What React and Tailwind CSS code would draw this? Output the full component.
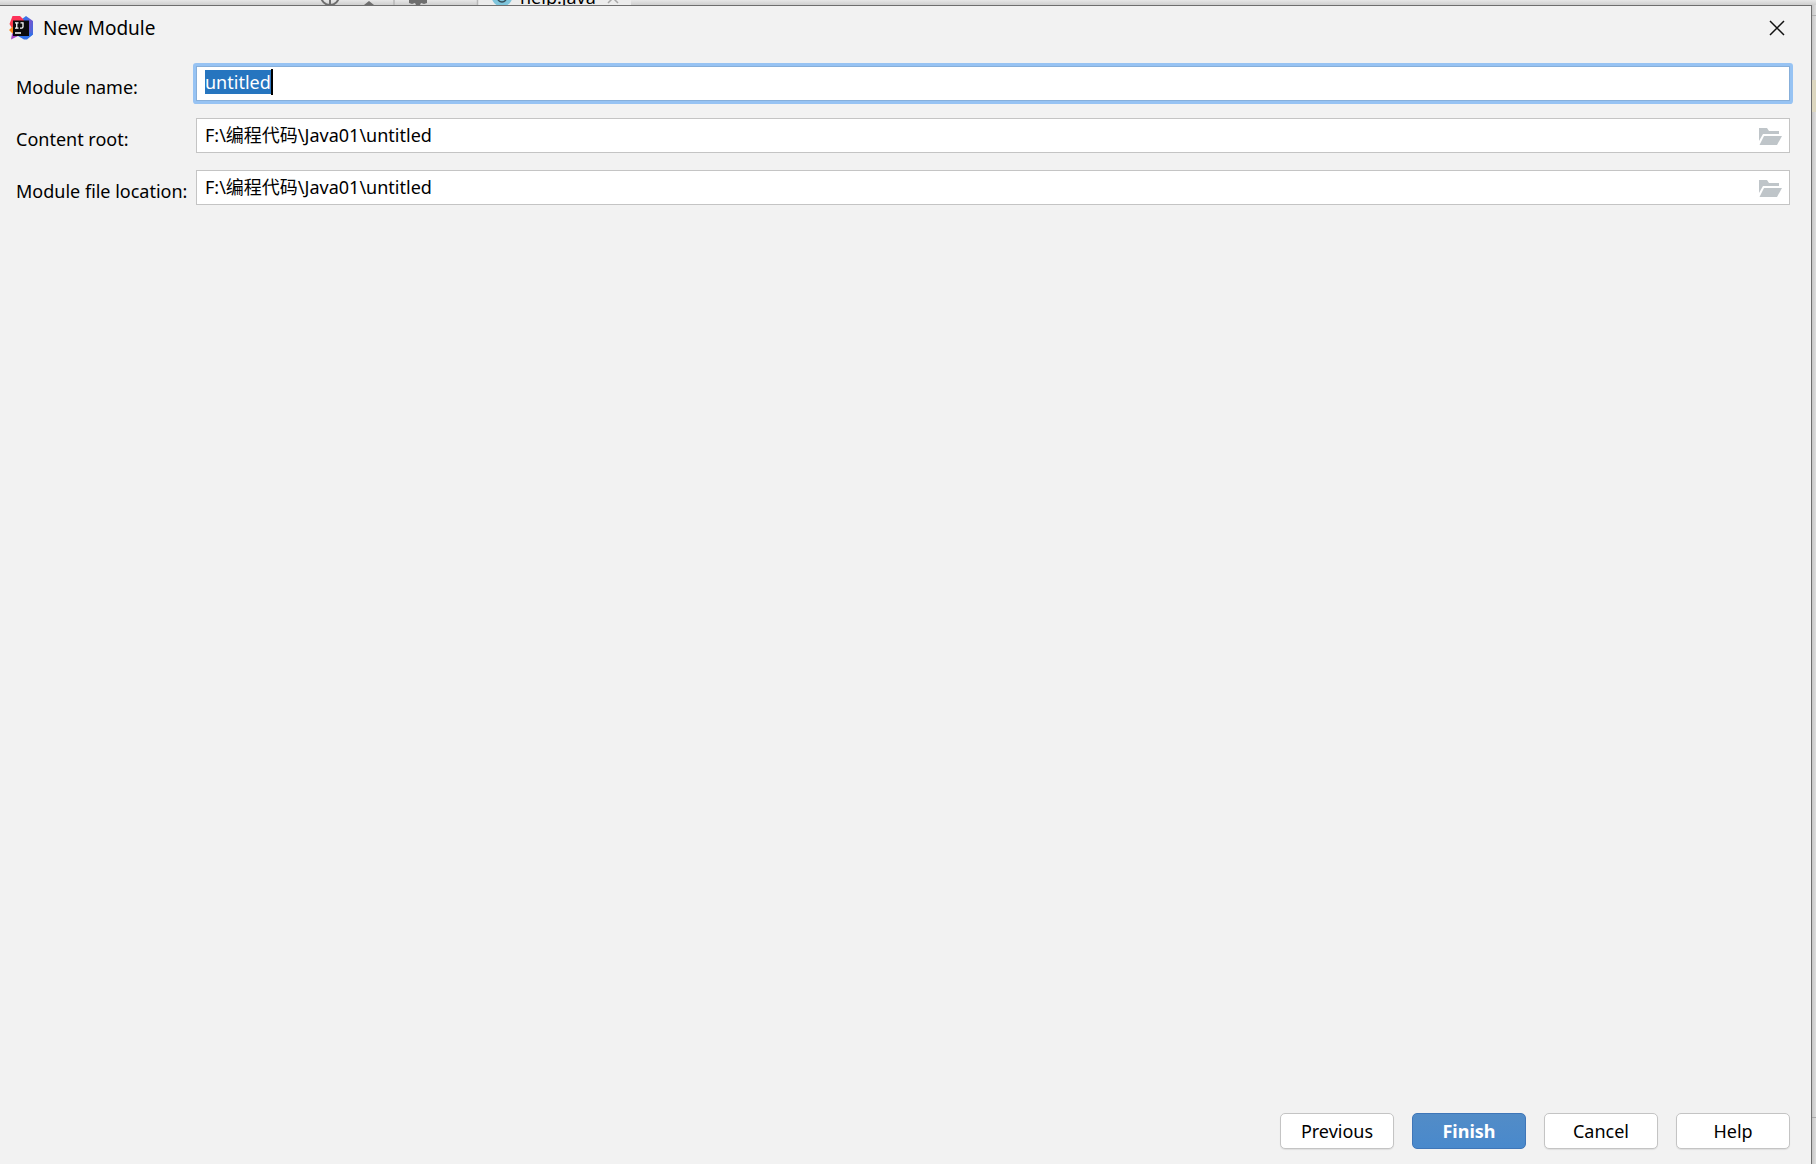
import { useState } from "react";

const fieldClass =
    "w-full h-[35px] px-2 pb-[3px] bg-white border border-[#c4c4c4] text-[18px] leading-[26px] text-black outline-none selection:bg-[#2675bf] selection:text-white";

const buttonClass =
    "w-[114px] h-9 rounded-[5px] border border-[#c4c4c4] bg-white text-[18px] leading-[26px] text-black shadow-[0_1px_1px_rgba(0,0,0,0.08)]";

const IdeaLogo = () => (
    <svg width="24" height="24" viewBox="0 0 24 24" aria-hidden="true" className="shrink-0">
        <defs>
            <linearGradient id="ideaRed" x1="0" y1="0" x2="0" y2="1">
                <stop offset="0" stopColor="#fe315d" />
                <stop offset="1" stopColor="#f8413f" />
            </linearGradient>
            <linearGradient id="ideaBlue" x1="0" y1="0" x2="1" y2="0.6">
                <stop offset="0" stopColor="#2f7bec" />
                <stop offset="0.4" stopColor="#3d70e6" />
                <stop offset="0.7" stopColor="#6f57d0" />
                <stop offset="1" stopColor="#4a68dd" />
            </linearGradient>
        </defs>
        <path d="M13 3 17 0l7 5v13.500L20 21l-8-1z" fill="url(#ideaBlue)" />
        <path d="M3.500 0H11l4 4-3 10H4L.500 8z" fill="url(#ideaRed)" />
        <path d="M4 10.500 0 14l4 4z" fill="#fc8a1c" />
        <path d="M3 18 2 23.500 9 20h4v-3H4z" fill="#a646c8" />
        <path d="m9 20 6 3.500h3l6-5-3-2z" fill="#3070e8" />
        <path d="M4 4.500h16v15.500H4z" fill="#0b0b0d" />
        <path d="M6 6.800h3.500M7.750 6.800v5.400M6 12.200h3.500M11.500 6.800h2.500v4q0 1.400-1.400 1.400H11M6 17h6" fill="none" stroke="#fff" strokeWidth="1.300" />
    </svg>
);

const FolderIcon = () => (
    <svg width="23" height="18" viewBox="0 0 23 18" aria-hidden="true" fill="#bfc5c9">
        <path d="M0 0h8l2 3h10v3H4L0 13z" />
        <path d="M5 8h18l-5 9H0.500z" />
    </svg>
);

// sliver of the editor toolbar that stays visible above the dialog
const EditorStrip = () => (
    <div className="flex h-[5px] shrink-0 overflow-hidden bg-linear-to-b from-[#e7e7e7] to-[#cfcfcf]">
        <svg width="660" height="5" viewBox="0 0 660 5" aria-hidden="true" className="shrink-0">
            <path d="M478 0h153v5H478z" fill="#ececec" />
            <circle cx="330" cy="-4" r="9" fill="none" stroke="#6e6e6e" strokeWidth="2" />
            <path d="M330 0v5" stroke="#6e6e6e" strokeWidth="2" />
            <path d="m364 5 5-4 5 4z" fill="#6e6e6e" />
            <path d="M394 0v5M477.500 0v5" stroke="#b8b8b8" strokeWidth="1.500" />
            <path d="M409 0h18v3l-3 1-3-1-1 2h-4l-1-2-3 1-3-1z" fill="#6e6e6e" />
            <circle cx="502" cy="-4" r="10.500" fill="#7fc5dc" />
            <path d="M498 0q4 4 8 0" fill="none" stroke="#34505c" strokeWidth="1.500" />
            <text x="520" y="4" fontFamily="Noto Sans" fontSize="18" fill="#000">help.java</text>
            <path d="m608 3 10-10M608-7l10 10" stroke="#a8a8a8" strokeWidth="1.500" />
        </svg>
    </div>
);

const PathField = ({ id, label, value, onChange }) => (
    <div className="flex">
        <label htmlFor={id} className="w-[180px] shrink-0 pt-2 whitespace-nowrap">{label}</label>
        <div className="relative flex-1">
            <input id={id} type="text" value={value} onChange={e => onChange(e.target.value)} className={fieldClass} />
            <button type="button" aria-label="Browse" className="absolute right-2 top-[10px]">
                <FolderIcon />
            </button>
        </div>
    </div>
);

const App = () => {
    const [name, setName] = useState("untitled");
    const [contentRoot, setContentRoot] = useState("F:\\编程代码\\Java01\\untitled");
    const [fileLocation, setFileLocation] = useState("F:\\编程代码\\Java01\\untitled");

    return (
        <div className="flex flex-col min-h-screen bg-[#e0e0e0] font-['Noto_Sans','Noto_Sans_CJK_SC',sans-serif] text-[18px] leading-[26px] text-black">
            <EditorStrip />
            <div className="flex flex-1">
                <div role="dialog" aria-labelledby="title" className="flex flex-col flex-1 bg-[#f2f2f2] border-t border-r border-[#6e6e6e]">
                    <header className="flex items-center h-11 pl-[9px] pr-5">
                        <IdeaLogo />
                        <h1 id="title" className="ml-[10px] flex-1 text-[19px]">New Module</h1>
                        <button type="button" aria-label="Close" className="p-[6px]">
                            <svg width="16" height="16" viewBox="0 0 16 16" aria-hidden="true">
                                <path d="m1 1 14 14M15 1 1 15" stroke="#111" strokeWidth="1.500" />
                            </svg>
                        </button>
                    </header>

                    <form className="flex flex-col flex-1 pt-4 pl-4 pr-[21px] pb-[15px]" onSubmit={e => e.preventDefault()}>
                        <div className="flex flex-col gap-[17px]">
                            <div className="flex">
                                <label htmlFor="name" className="w-[180px] shrink-0 pt-2 whitespace-nowrap">Module name:</label>
                                <div className="relative flex-1 ring-3 ring-[#97c3f3] rounded-[1px]">
                                    <input
                                        id="name"
                                        type="text"
                                        value={name}
                                        onChange={e => setName(e.target.value)}
                                        onFocus={e => e.target.select()}
                                        autoFocus
                                        className="w-full h-[35px] px-2 pb-[3px] bg-white border border-[#87afda] text-[18px] leading-[26px] text-black outline-none selection:bg-[#2675bf] selection:text-white"
                                    />
                                    <div className="absolute left-[9px] top-[3px] flex pointer-events-none" aria-hidden="true">
                                        <span className="invisible">{name}</span>
                                        <span className="w-[2px] h-[26px] bg-black" />
                                    </div>
                                </div>
                            </div>
                            <PathField id="root-path" label="Content root:" value={contentRoot} onChange={setContentRoot} />
                            <PathField id="file-path" label="Module file location:" value={fileLocation} onChange={setFileLocation} />
                        </div>

                        <div className="flex justify-end gap-[18px] mt-auto">
                            <button type="button" className={buttonClass}>Previous</button>
                            <button type="submit" className="w-[114px] h-9 rounded-[5px] border border-[#3f76b8] bg-linear-to-b from-[#528cc7] to-[#4989cc] text-[18px] leading-[26px] font-bold text-white">
                                Finish
                            </button>
                            <button type="button" className={buttonClass}>Cancel</button>
                            <button type="button" className={buttonClass}>Help</button>
                        </div>
                    </form>
                </div>
                <div className="flex flex-col w-1 bg-linear-to-r from-[#c6c6c6] to-[#dedede]">
                    <div className="h-[11px] border-b border-[#b0b0b0]" />
                    <div className="mt-16 h-8 bg-[#dcd7c0]" />
                    <div className="mt-auto h-[47px] border-t border-[#a8a8a8]" />
                </div>
            </div>
        </div>
    );
};

export default App;
